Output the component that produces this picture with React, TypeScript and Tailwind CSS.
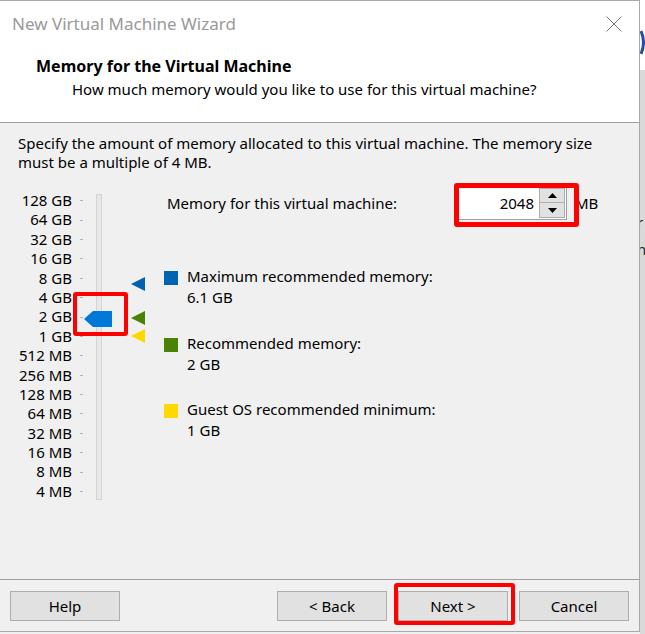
import React from "react";

const labels = [
  "128 GB", "64 GB", "32 GB", "16 GB", "8 GB", "4 GB", "2 GB", "1 GB",
  "512 MB", "256 MB", "128 MB", "64 MB", "32 MB", "16 MB", "8 MB", "4 MB",
];

function Tri({ color, className }: { color: string; className: string }) {
  return (
    <svg className={className} width="14" height="14" viewBox="0 0 14 14">
      <polygon points="0,7 14,0 14,14" fill={color} />
    </svg>
  );
}

function Legend({ color, title, value }: { color: string; title: string; value: string }) {
  return (
    <div className="flex">
      <div className={`w-[14px] h-[14px] mt-[5px] ${color}`} />
      <div className="ml-[9px] leading-[21px]">
        <div>{title}</div>
        <div>{value}</div>
      </div>
    </div>
  );
}

function Btn({ children }: { children: React.ReactNode }) {
  return (
    <div className="w-[110px] h-[30px] bg-[#e1e1e1] border border-[#adadad] flex items-center justify-center">
      {children}
    </div>
  );
}

export default function App() {
  return (
    <div className="flex w-[645px] h-[634px] bg-[#f0f0f0] text-black text-[15px] font-['Noto_Sans',sans-serif]">
      <div className="w-[640px] h-[632px] flex flex-col border-t border-r border-b border-[#a9a9a9] bg-[#f0f0f0] shrink-0">
        <div className="h-[122px] bg-white border-b border-[#a0a0a0] flex flex-col shrink-0">
          <div className="flex justify-between items-start pl-[12px] pr-[17px] pt-[11px]">
            <div className="text-[17px] leading-[24px] text-[#999999]">New Virtual Machine Wizard</div>
            <svg width="16" height="16" viewBox="0 0 16 16" className="mt-[4px]">
              <path d="M0.5 0.5 L15.5 15.5 M15.5 0.5 L0.5 15.5" stroke="#7a7a7a" strokeWidth="1" />
            </svg>
          </div>
          <div className="pl-[36px] mt-[20px] font-bold text-[16px] leading-[20px]">Memory for the Virtual Machine</div>
          <div className="pl-[72px] mt-[3px] leading-[20px]">How much memory would you like to use for this virtual machine?</div>
        </div>

        <div className="flex-1 flex flex-col">
          <div className="px-[18px] pt-[11px] leading-[19px]">
            Specify the amount of memory allocated to this virtual machine. The memory size must be a multiple of 4 MB.
          </div>

          <div className="flex mt-[13px]">
            <div className="relative w-[164px] flex shrink-0">
              <div className="w-[72px] flex flex-col mt-[6px] text-right">
                {labels.map((l) => (
                  <div key={l} className="h-[19.4px] leading-[19.4px] whitespace-nowrap">{l}</div>
                ))}
              </div>
              <div className="w-[24px] flex flex-col mt-[6px]">
                {labels.map((l) => (
                  <div key={l} className="h-[19.4px] flex items-center">
                    <div className="ml-[8px] w-[3px] h-[1px] bg-[#b4b4b4]" />
                  </div>
                ))}
              </div>
              <div className="w-[6px] h-[306px] mt-[9px] bg-[#e7e7e7] border border-[#d4d4d4]" />

              <svg className="absolute left-[84px] top-[126px]" width="28" height="16" viewBox="0 0 28 16">
                <polygon points="0,8 9,0 28,0 28,16 9,16" fill="#0078d7" />
              </svg>
              <div className="absolute left-[73px] top-[107px] w-[55px] h-[44px] border-4 border-[#ff0000] rounded-[3px]" />
              <Tri color="#0063b1" className="absolute left-[131px] top-[92px]" />
              <Tri color="#498205" className="absolute left-[131px] top-[126px]" />
              <Tri color="#ffd800" className="absolute left-[131px] top-[144px]" />
            </div>

            <div className="flex flex-col flex-1">
              <div className="flex items-center h-[36px]">
                <div className="ml-[3px] w-[290px] whitespace-nowrap">Memory for this virtual machine:</div>
                <div className="relative w-[110px] h-[33px] bg-white border border-[#a0a0a0] flex items-center justify-end">
                  <div className="pr-[5px] leading-[20px]">2048</div>
                  <div className="flex flex-col w-[26px] h-[30px] mr-[1px]">
                    <div className="h-[15px] bg-[#e1e1e1] border border-[#adadad] flex items-center justify-center">
                      <svg width="9" height="5" viewBox="0 0 9 5"><polygon points="0,5 4.5,0 9,5" fill="#000" /></svg>
                    </div>
                    <div className="h-[15px] bg-[#e1e1e1] border border-[#adadad] border-t-0 flex items-center justify-center">
                      <svg width="9" height="5" viewBox="0 0 9 5"><polygon points="0,0 4.5,5 9,0" fill="#000" /></svg>
                    </div>
                  </div>
                  <div className="absolute left-[-4px] top-[-5px] w-[125px] h-[44px] border-[5px] border-[#ff0000] rounded-[3px]" />
                </div>
                <div className="ml-[8px]">MB</div>
              </div>

              <div className="mt-[45px] flex flex-col gap-[24.5px]">
                <Legend color="bg-[#0063b1]" title="Maximum recommended memory:" value="6.1 GB" />
                <Legend color="bg-[#498205]" title="Recommended memory:" value="2 GB" />
                <Legend color="bg-[#ffd800]" title="Guest OS recommended minimum:" value="1 GB" />
              </div>
            </div>
          </div>
        </div>

        <div className="h-[52px] border-t border-[#a0a0a0] flex items-start pt-[11px] px-[10px] shrink-0">
          <Btn>Help</Btn>
          <div className="ml-auto flex gap-[11px]">
            <Btn>&lt; Back</Btn>
            <div className="relative">
              <Btn>Next &gt;</Btn>
              <div className="absolute left-[-4px] top-[-8px] w-[121px] h-[42px] border-4 border-[#ff0000] rounded-[3px]" />
            </div>
            <Btn>Cancel</Btn>
          </div>
        </div>
      </div>

      <div className="w-[5px] h-[634px] flex flex-col overflow-hidden">
        <div className="h-[70px] bg-white">
          <svg width="5" height="70" viewBox="0 0 5 70">
            <path d="M1 31 Q6 42 1 54" stroke="#1f4f9e" strokeWidth="3" fill="none" />
          </svg>
        </div>
        <div className="flex-1 bg-[#d9d9d9] relative">
          <div className="absolute left-[-3px] top-[140px] text-[15px] leading-[24px] text-[#222]">r</div>
          <div className="absolute left-[-3px] top-[167px] text-[15px] leading-[24px] text-[#222]">n</div>
        </div>
      </div>
    </div>
  );
}
